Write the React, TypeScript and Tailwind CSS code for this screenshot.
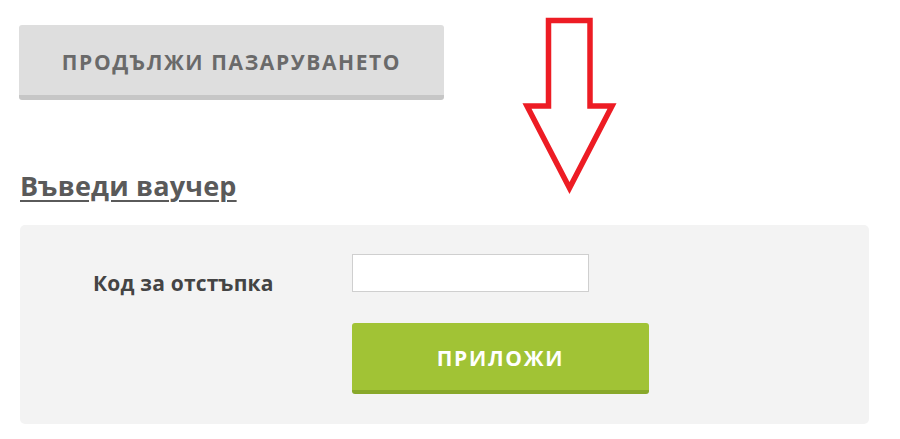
import React from "react";

export default function App() {
  return (
    <div className="relative w-[900px] h-[439px] bg-white font-['Open_Sans',sans-serif] overflow-hidden">
      <div className="pt-[25px] pl-[19px]">
        <button className="w-[425px] h-[75px] bg-[#dedede] rounded-[3px] border-b-[5px] border-[#c6c6c6] text-[#6a6a6a] font-bold text-[21px] tracking-[1.6px] pt-[5px]">
          ПРОДЪЛЖИ ПАЗАРУВАНЕТО
        </button>
      </div>
      <div className="pl-[20px] mt-[68px]">
        <a href="#" className="text-[27px] font-bold text-[#5a5a5a] tracking-[0.2px] underline underline-offset-[4px] decoration-[2px] leading-[36px]">
          Въведи ваучер
        </a>
      </div>
      <div className="ml-[20px] mt-[21px] w-[849px] h-[199px] bg-[#f3f3f3] rounded-[5px] pt-[29px]">
        <div className="flex">
          <div className="w-[332px] pl-[73px] pt-[15px] text-[21px] font-bold text-[#444] tracking-[0.2px] leading-[28px]">
            Код за отстъпка
          </div>
          <div className="flex flex-col gap-[31px]">
            <input
              type="text"
              className="w-[237px] h-[38px] bg-white border border-[#cfcfcf] outline-none"
            />
            <button className="w-[297px] h-[71px] bg-[#a1c335] rounded-[3px] border-b-[4px] border-[#88a82a] text-white font-bold text-[21px] tracking-[1.7px] pt-[5px]">
              ПРИЛОЖИ
            </button>
          </div>
        </div>
      </div>
      <svg
        className="absolute left-0 top-0 pointer-events-none"
        width="900"
        height="439"
        viewBox="0 0 900 439"
      >
        <polygon
          points="548.5,20.5 590,20.5 590,106 612,106 569.5,188 527,106 548.5,106"
          fill="none"
          stroke="#ed1c24"
          strokeWidth="5.5"
          strokeLinejoin="miter"
          strokeMiterlimit="3"
        />
      </svg>
    </div>
  );
}
